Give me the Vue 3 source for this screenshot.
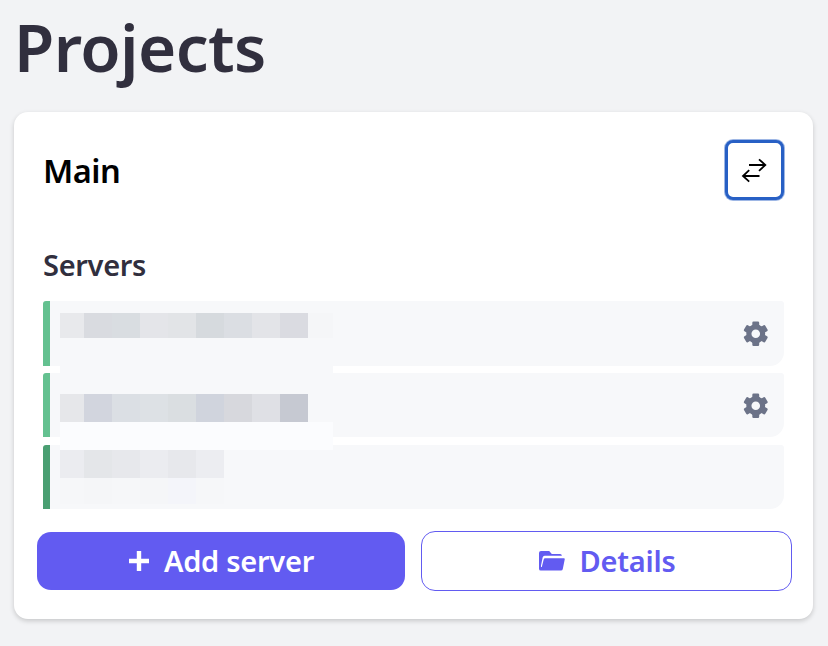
<script setup>
const servers = [
  { id: 1, state: 'running', configurable: true },
  { id: 2, state: 'running', configurable: true },
  { id: 3, state: 'stable', configurable: false },
]

const teeth = [0, 60, 120, 180, 240, 300]

// Each band covers part of the server list; its cells carry the redaction colours.
const bands = [
  { height: 25, cells: ['#e8e9ec', '#d9dbe0', '#d9dde1', '#e4e5e9', '#e2e4e7', '#d6dade', '#dbdee3', '#e3e4e8', '#dadbe1', '#f5f6f8'] },
  { height: 56, fill: '#f7f8fa', cells: [] },
  { height: 28, cells: ['#e6e7ea', '#d2d5de', '#dbdfe4', '#dde1e5', '#dadee1', '#d0d4dd', '#d7d8dd', '#dfe0e5', '#c6c9d2'] },
  { height: 28, fill: '#fbfcfe', cells: [] },
  { height: 28, cells: ['#ebecf0', '#e4e6e9', '#e7e8ec', '#ebecf0', '#e7e8ec', '#ecedf1'] },
  { height: 26, cells: ['#f6f7f9', '#f5f6f8', '#f6f7f9', '#f5f6f8', '#f4f5fa', '#f6f7f9'] },
]
</script>

<template>
  <main class="page">
    <h1 class="title">Projects</h1>
    <section class="card">
      <header class="card-head">
        <h2 class="name">Main</h2>
        <button class="swap" aria-label="Switch project">
          <svg width="26" height="26" viewBox="0 0 26 26" fill="none" stroke="#000" stroke-width="1.8">
            <path d="M8 8h16.5M18 2.3 24.3 8 18 13.8M18.5 19H2M8.2 13.2 2 19l6.2 5.6" />
          </svg>
        </button>
      </header>
      <h3 class="subtitle">Servers</h3>
      <div class="servers">
        <div v-for="server in servers" :key="server.id" class="server" :class="server.state">
          <svg v-if="server.configurable" class="gear" viewBox="0 0 24 24" fill="#6c7388">
            <circle cx="12" cy="12" r="5.6" fill="none" stroke="#6c7388" stroke-width="4.2" />
            <path v-for="angle in teeth" :key="angle" :transform="`rotate(${angle} 12 12)`" d="M8.2 6.6 9.2 5V3q0-1 1-1h3.6q1 0 1 1v2l1 1.6z" />
          </svg>
        </div>
        <div class="redaction">
          <div v-for="(band, i) in bands" :key="i" class="band" :style="{ height: band.height + 'px', background: band.fill }">
            <span v-for="(cell, j) in band.cells" :key="j" :style="{ background: cell }"></span>
          </div>
        </div>
      </div>
      <footer class="actions">
        <button class="action primary">
          <svg class="plus" viewBox="0 0 20 20" fill="none" stroke="currentColor" stroke-width="4.4">
            <path d="M10 0v20M0 10h20" />
          </svg>
          <span>Add server</span>
        </button>
        <button class="action outline">
          <svg class="folder" viewBox="0 0 26 20" fill="currentColor">
            <path d="M2 0h8.2l2.6 3h8.3a1.8 1.8 0 0 1 1.8 1.7H5.6a2 2 0 0 0-1.9 1.5L2 14.5V16h.8l1.9-7.6A1.6 1.6 0 0 1 6.2 7.2h18.5c.8 0 1.2.6 1 1.3L23.8 18a2 2 0 0 1-1.9 1.6H2A1.9 1.9 0 0 1 0 17.7V2a2 2 0 0 1 2-2z" />
          </svg>
          <span>Details</span>
        </button>
      </footer>
    </section>
  </main>
</template>

<style>
body {
  background: #f2f3f5;
}
</style>

<style scoped>
.page {
  box-sizing: border-box;
  height: 646px;
  padding: 0 15px 0 14px;
  font-family: "Noto Sans", sans-serif;
  overflow: hidden;
}
h1, h2, h3 {
  margin: 0;
  font-weight: 600;
}
.title {
  height: 112px;
  padding-top: 2px;
  box-sizing: border-box;
  font-size: 65.5px;
  line-height: 90px;
  letter-spacing: -0.6px;
  color: #312f3e;
}
.card {
  box-sizing: border-box;
  height: 507px;
  padding: 28px 21px 0 23px;
  border-radius: 14px;
  background: #fff;
  box-shadow: 0 2px 5px rgba(0, 0, 0, 0.18);
}
.card-head {
  display: flex;
  align-items: center;
  justify-content: space-between;
  height: 60px;
  padding: 0 8px 0 6px;
}
.name {
  padding-top: 2px;
  font-size: 32.6px;
  line-height: 44px;
  letter-spacing: -0.5px;
  color: #000;
}
.swap {
  display: flex;
  align-items: center;
  justify-content: center;
  box-sizing: border-box;
  width: 59px;
  height: 60px;
  padding: 0 1px 0 0;
  border: 3px solid #2860c5;
  border-radius: 8px;
  background: #fff;
  box-shadow: 0 0 0 1px rgba(40, 96, 197, 0.45);
}
.subtitle {
  padding: 44px 0 0 6px;
  height: 57px;
  font-size: 29px;
  line-height: 41px;
  letter-spacing: -0.3px;
  color: #312f3e;
}
.servers {
  position: relative;
  display: grid;
  grid-template-rows: 72px 72px 64px;
  margin: 0 8px 0 6px;
}
.server {
  display: flex;
  align-items: center;
  justify-content: flex-end;
  height: 64px;
  box-sizing: border-box;
  padding: 1px 14px 0 0;
  border-left: 7px solid #64c190;
  border-radius: 3px 3px 14px 0;
  background: #f7f8fa;
}
.server:first-child {
  height: 65px;
  padding-top: 0;
}
.stable {
  border-left-color: #4a9f72;
}
.gear {
  width: 29.5px;
  height: 29.5px;
}
.redaction {
  position: absolute;
  left: 17px;
  top: 12px;
  width: 273px;
}
.band {
  display: grid;
  grid-template-columns: 24px repeat(8, 28px) 25px;
}
.actions {
  display: grid;
  grid-template-columns: 368px 371px;
  column-gap: 16px;
  align-items: center;
  margin-top: 22px;
}
.action {
  display: flex;
  align-items: center;
  justify-content: center;
  gap: 15px;
  box-sizing: border-box;
  padding: 0;
  border-radius: 14px;
  font: 600 29px/40px "Noto Sans", sans-serif;
  letter-spacing: -0.25px;
}
.primary {
  height: 58px;
  padding-left: 1px;
  border: 0;
  background: #625bf1;
  color: #fff;
}
.outline {
  height: 60px;
  padding-left: 1px;
  border: 1px solid #625bf1;
  background: #fff;
  color: #625bf1;
}
.plus {
  width: 20px;
  height: 20px;
}
.folder {
  width: 26px;
  height: 20px;
}
</style>
